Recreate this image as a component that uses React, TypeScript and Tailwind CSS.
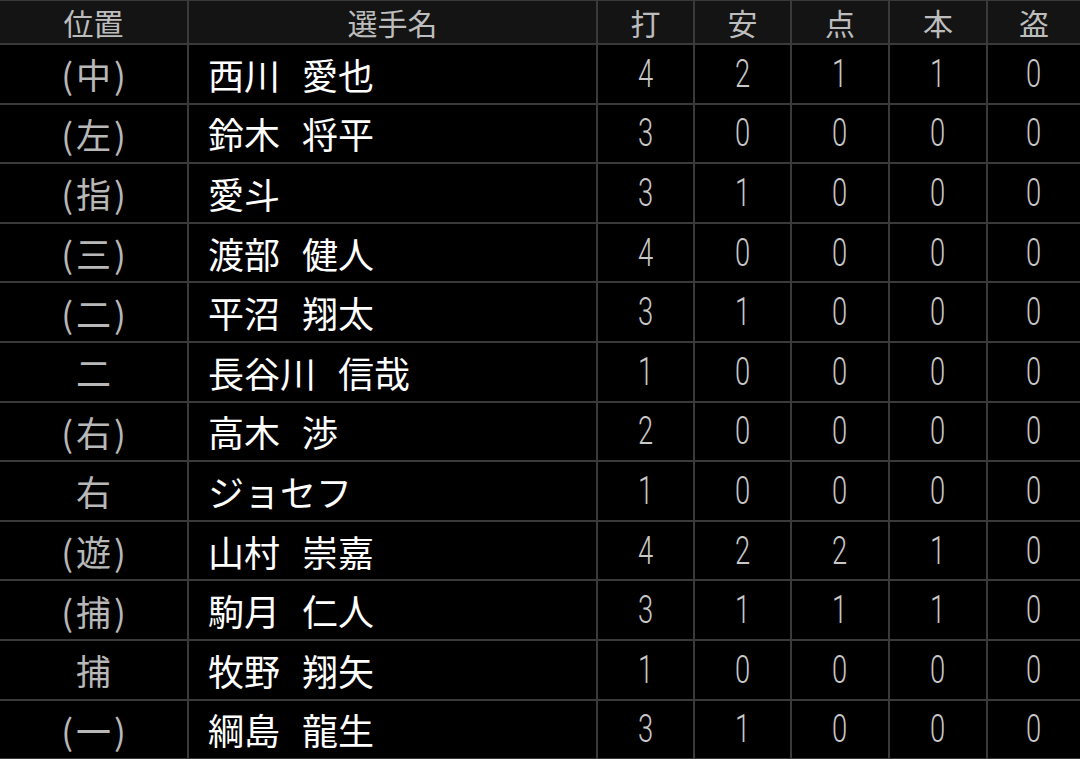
const HEADERS = ["位置", "選手名", "打", "安", "点", "本", "盗"];

const ROWS: [string, string, number[]][] = [
  ["(中)", "西川 愛也", [4, 2, 1, 1, 0]],
  ["(左)", "鈴木 将平", [3, 0, 0, 0, 0]],
  ["(指)", "愛斗", [3, 1, 0, 0, 0]],
  ["(三)", "渡部 健人", [4, 0, 0, 0, 0]],
  ["(二)", "平沼 翔太", [3, 1, 0, 0, 0]],
  ["二", "長谷川 信哉", [1, 0, 0, 0, 0]],
  ["(右)", "高木 渉", [2, 0, 0, 0, 0]],
  ["右", "ジョセフ", [1, 0, 0, 0, 0]],
  ["(遊)", "山村 崇嘉", [4, 2, 2, 1, 0]],
  ["(捕)", "駒月 仁人", [3, 1, 1, 1, 0]],
  ["捕", "牧野 翔矢", [1, 0, 0, 0, 0]],
  ["(一)", "綱島 龍生", [3, 1, 0, 0, 0]],
];

const jp = "font-['Noto_Sans_CJK_JP','Noto_Sans',sans-serif]";

export default function App() {
  return (
    <div className="w-[1080px] h-[759px] overflow-hidden bg-[#3a3a3a] pt-px">
      <div className="grid grid-cols-[187px_407px_95px_95px_96px_96px_1fr] gap-[2px]">
        {HEADERS.map((h) => (
          <div
            key={h}
            className={`h-[42px] bg-[#141414] flex items-center justify-center text-[30px] leading-none text-[#bdbdbd] ${jp}`}
          >
            {h}
          </div>
        ))}
        {ROWS.map(([pos, name, stats]) => (
          <Row key={name} pos={pos} name={name} stats={stats} />
        ))}
      </div>
    </div>
  );
}

function Row({ pos, name, stats }: { pos: string; name: string; stats: number[] }) {
  return (
    <>
      <div
        className={`h-[57.6px] bg-black flex items-center justify-center pl-[3px] tracking-[3px] text-[35px] leading-none text-[#b8b8b8] ${jp}`}
      >
        {pos}
      </div>
      <div
        className={`h-[57.6px] bg-black flex items-center gap-[22px] pl-[19px] text-[36px] leading-none text-white ${jp}`}
      >
        {name.split(" ").map((part) => (
          <span key={part}>{part}</span>
        ))}
      </div>
      {stats.map((n, i) => (
        <div key={i} className="h-[57.6px] bg-black flex items-center justify-center">
          <span className="inline-block scale-x-[0.72] font-['Roboto',sans-serif] font-light text-[38px] leading-none text-[#c8c8c8]">
            {n}
          </span>
        </div>
      ))}
    </>
  );
}
